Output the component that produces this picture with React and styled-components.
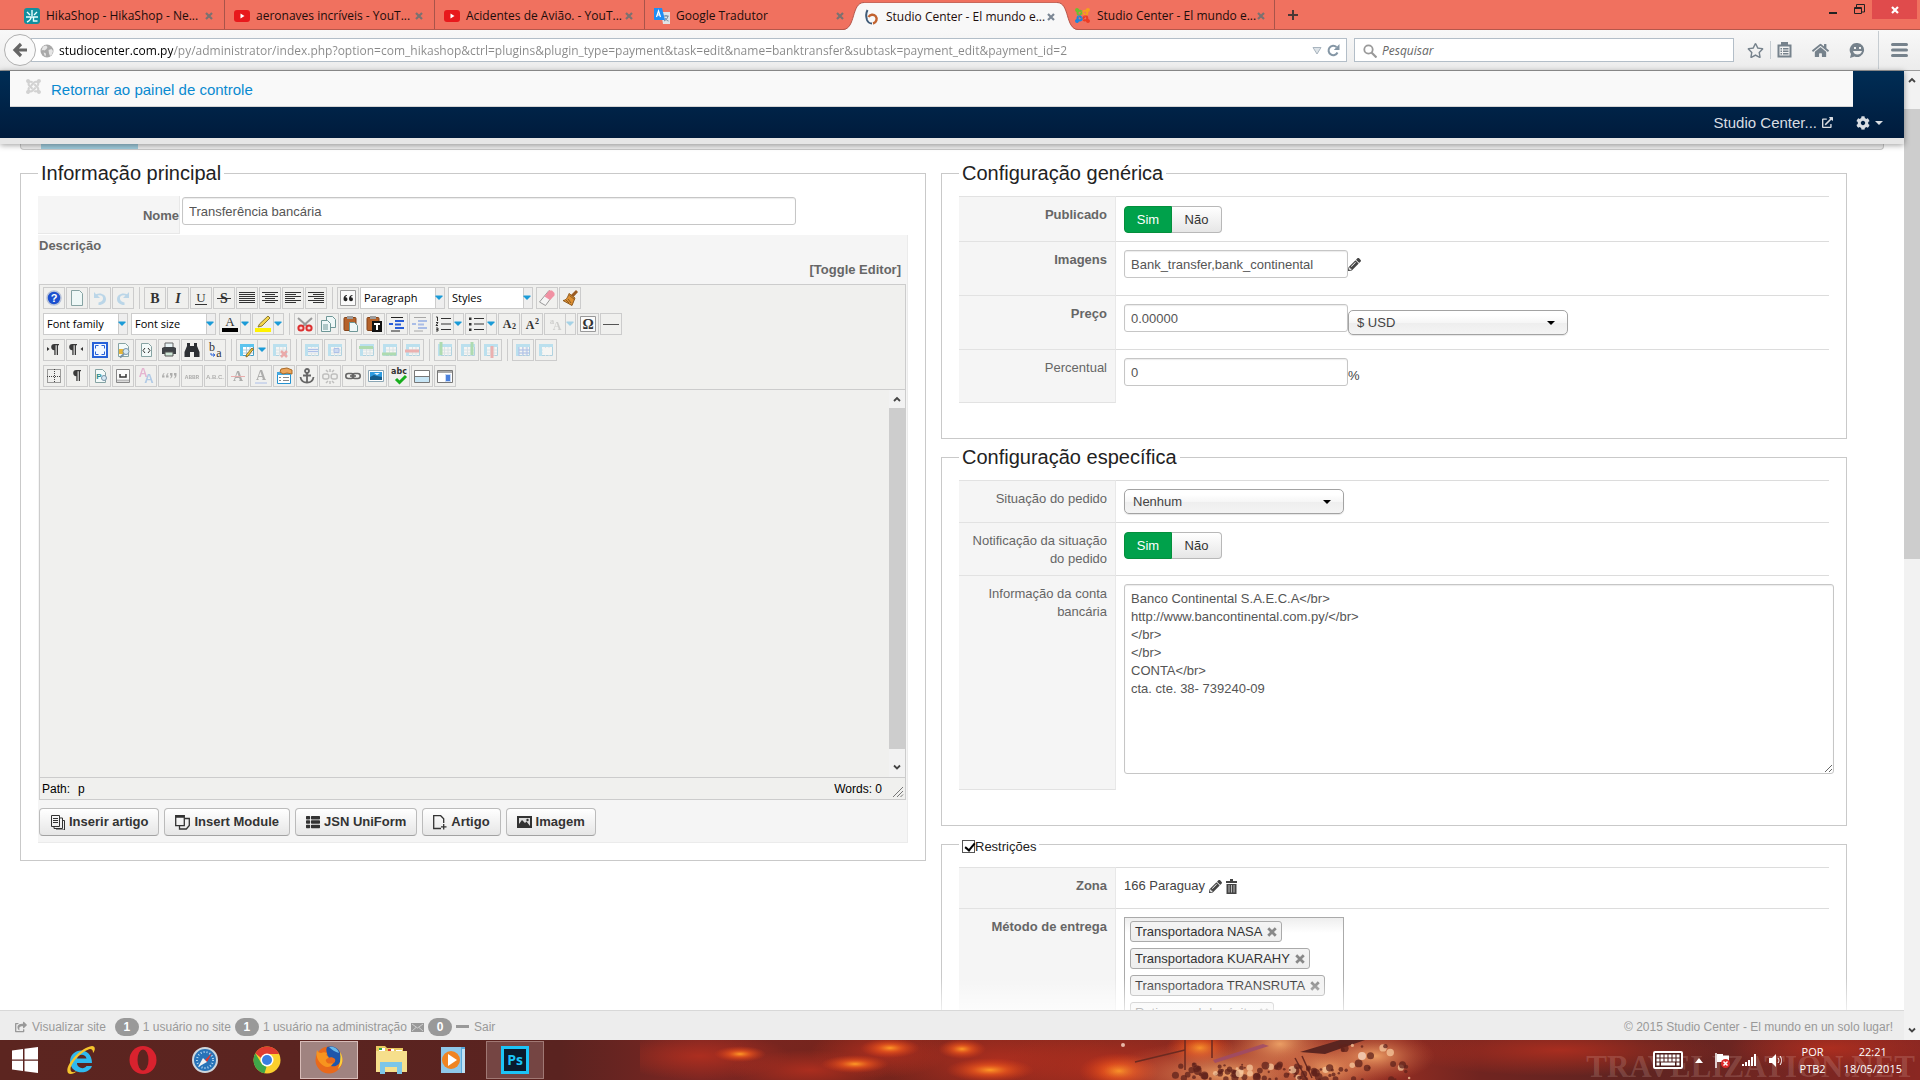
import React, { useState } from 'react'
import styled, { createGlobalStyle, css } from 'styled-components'
import { FaHome, FaRegStar, FaCog, FaPencilAlt, FaExternalLinkAlt, FaThList, FaShareSquare, FaJoomla } from 'react-icons/fa'

const GlobalStyle = createGlobalStyle`
  * { box-sizing: border-box; }
  body {
    margin: 0;
    font-family: "Liberation Sans", Arial, sans-serif;
    font-size: 13px;
    line-height: 18px;
    color: #333;
    background: #fff;
  }
  button, input, select, textarea { font: inherit; color: inherit; margin: 0; }
  button { cursor: pointer; }
  svg { display: block; flex: none; }
  a { text-decoration: none; }
`

/* ---------- browser icons ---------- */

const Cross = ({ color = '#7b7170', size = 8 }) => (
  <svg width={size} height={size} viewBox="0 0 8 8"><path d="M1 1l6 6M7 1L1 7" stroke={color} strokeWidth="2.2" /></svg>
)

const HikaIcon = () => (
  <svg width="16" height="16" viewBox="0 0 16 16">
    <rect width="16" height="16" rx="3" fill="#128f9e" />
    <path d="M8 2v6M3 4l3 3M13 4l-3 3M2 9h12M7 9c0 3-2 4-4 5M9.500 9v4h4" stroke="#e8ffff" strokeWidth="1.400" fill="none" />
  </svg>
)
const YoutubeIcon = () => (
  <svg width="16" height="16" viewBox="0 0 16 16">
    <rect y="2" width="16" height="12" rx="3" fill="#e8191c" />
    <path d="M6.500 5.500v5l4-2.500z" fill="#fff" />
  </svg>
)
const TranslateIcon = () => (
  <svg width="16" height="16" viewBox="0 0 16 16">
    <path d="M7 4h9v12H9z" fill="#dfe3e8" />
    <path d="M9.500 8h5M12 7v1M14 8c-.5 2.500-2 4-4 5M11 10c.5 1.500 2 2.500 3.500 3" stroke="#6b8299" fill="none" />
    <path d="M0 0h8l3 12H1a1 1 0 0 1-1-1z" fill="#1f8df5" />
    <path d="M2.500 9l2-6 2 6M3 7h3" stroke="#fff" strokeWidth="1.200" fill="none" />
  </svg>
)
const StudioIcon = () => (
  <svg width="16" height="16" viewBox="0 0 16 16" fill="none">
    <path d="M3.500 1C2 4 2 8 3 11c1 2.500 3 3.500 5 3.500" stroke="#3f5a77" strokeWidth="2" />
    <path d="M4.500 8C6 5.500 9.500 5 11.500 7c2.200 2.500 1 6.500-2.500 7.500" stroke="#c2622e" strokeWidth="2.400" />
  </svg>
)
/* one copy of the mark per quarter, each in its own colour */
const JoomlaStack = styled.span`
  display: grid;
  > * { grid-area: 1 / 1; }
  > :nth-child(1) { color: #6cbf2f; clip-path: inset(0 50% 50% 0); }
  > :nth-child(2) { color: #f7a11b; clip-path: inset(0 0 50% 50%); }
  > :nth-child(3) { color: #ee3b24; clip-path: inset(50% 0 0 50%); }
  > :nth-child(4) { color: #1a86dd; clip-path: inset(50% 50% 0 0); }
`
const JoomlaColor = () => (
  <JoomlaStack><FaJoomla size={17} /><FaJoomla size={17} /><FaJoomla size={17} /><FaJoomla size={17} /></JoomlaStack>
)
const GlobeIcon = () => (
  <svg width="14" height="14" viewBox="0 0 14 14">
    <circle cx="7" cy="7" r="6.500" fill="#a9a9a9" />
    <path d="M3 2.500l3-1 1.500 1.500-1 2-2 1.500L3 6l-1.500.5zM8.500 6l3-1 1.500 2-1 3.500-2 1.500-1-2.500zM3.500 8.500l2 .5.5 2-1 1.500z" fill="#e6e6e6" />
  </svg>
)

/* ---------- window and tabs ---------- */

const Desktop = styled.div`
  display: flex;
  flex-direction: column;
  height: 100vh;
  overflow: hidden;
`
const TabStrip = styled.div`
  display: flex;
  flex: none;
  height: 30px;
  padding-left: 15px;
  background: #f0715f;
  box-shadow: inset 0 -1px 0 #b5574b;
  font: 12px/16px "Open Sans", "Noto Sans", sans-serif;
  color: #1d0d0b;
`
const Tab = styled.div`
  display: flex;
  align-items: center;
  gap: 6px;
  width: 210px;
  padding: 2px 9px 0;
  margin-bottom: 1px;
  border-right: ${p => (p.$line ? '1px solid #a8544a' : 'none')};
`
const ActiveTab = styled.div`
  display: flex;
  width: 234px;
  margin: 0 -12px;
  z-index: 1;
`
const ActiveBody = styled.div`
  display: flex;
  flex: 1;
  align-items: center;
  gap: 6px;
  margin-top: 2px;
  background: #f8f8f8;
  border-top: 1px solid #c9685b;
`
const TabTitle = styled.span`
  flex: 1;
  margin-right: -6px;
  white-space: nowrap;
`
const TabClose = styled.button`
  display: flex;
  align-items: center;
  justify-content: center;
  width: 12px;
  height: 16px;
  padding: 0;
  border: 0;
  background: none;
`
const NewTab = styled(TabClose)`
  width: 36px;
  height: 30px;
`
const WindowButtons = styled.div`
  display: flex;
  margin-left: auto;
  padding-right: 3px;
`
const WindowButton = styled.button`
  display: flex;
  align-items: center;
  justify-content: center;
  width: ${p => (p.$close ? 45 : 26)}px;
  height: 19px;
  padding: 0;
  border: 0;
  background: ${p => (p.$close ? '#e04b4c' : 'none')};
`

const tabs = [
  { title: 'HikaShop - HikaShop - Ne...', icon: <HikaIcon />, line: true },
  { title: 'aeronaves incríveis - YouT...', icon: <YoutubeIcon />, line: true },
  { title: 'Acidentes de Avião. - YouT...', icon: <YoutubeIcon />, line: true },
  { title: 'Google Tradutor', icon: <TranslateIcon /> },
  { title: 'Studio Center - El mundo e...', icon: <StudioIcon />, active: true },
  { title: 'Studio Center - El mundo e...', icon: <JoomlaColor />, line: true },
]

const Tabs = () => (
  <TabStrip>
    {tabs.map((t, i) => t.active ? (
      <ActiveTab key={i}>
        <svg width="21" height="30" viewBox="0 0 21 30">
          <path d="M0 30C13 29 8 2.500 21 2.500V30z" fill="#f8f8f8" />
          <path d="M0 29.500C13 29 8 2.500 21 2.500" fill="none" stroke="#b5574b" />
        </svg>
        <ActiveBody>
          {t.icon}
          <TabTitle>{t.title}</TabTitle>
          <TabClose aria-label="Fechar aba"><Cross color="#7b8794" /></TabClose>
        </ActiveBody>
        <svg width="21" height="30" viewBox="0 0 21 30">
          <path d="M21 30C8 29 13 2.500 0 2.500V30z" fill="#f8f8f8" />
          <path d="M21 29.500C8 29 13 2.500 0 2.500" fill="none" stroke="#b5574b" />
        </svg>
      </ActiveTab>
    ) : (
      <Tab key={i} $line={t.line}>
        {t.icon}
        <TabTitle>{t.title}</TabTitle>
        <TabClose aria-label="Fechar aba"><Cross /></TabClose>
      </Tab>
    ))}
    <NewTab aria-label="Nova aba">
      <svg width="10" height="10" viewBox="0 0 10 10"><path d="M5 0v10M0 5h10" stroke="#4a3836" strokeWidth="2" /></svg>
    </NewTab>
    <WindowButtons>
      <WindowButton aria-label="Minimizar">
        <svg width="10" height="10" viewBox="0 0 10 10"><path d="M1 8h8" stroke="#222" strokeWidth="2" /></svg>
      </WindowButton>
      <WindowButton aria-label="Restaurar">
        <svg width="11" height="11" viewBox="0 0 11 11" fill="none" stroke="#222"><path d="M.5 3.500h7v6h-7zM2.500 3V.5h8V8H8M.5 4.500h7" /></svg>
      </WindowButton>
      <WindowButton $close aria-label="Fechar"><Cross color="#fff" /></WindowButton>
    </WindowButtons>
  </TabStrip>
)

/* ---------- address bar ---------- */

const NavBar = styled.div`
  display: flex;
  flex: none;
  align-items: center;
  height: 41px;
  padding: 0 12px 0 4px;
  background: linear-gradient(#f8f8f8, #ececec);
  border-bottom: 1px solid #9b9b9b;
  font: 12px/16px "Open Sans", "Noto Sans", sans-serif;
  color: #76828c;
`
const BackButton = styled.button`
  display: flex;
  align-items: center;
  justify-content: center;
  width: 32px;
  height: 32px;
  margin-right: -5px;
  padding: 0;
  border: 1px solid #b0b0b0;
  border-radius: 50%;
  background: #f9f9f9;
  z-index: 1;
`
const Box = styled.div`
  display: flex;
  align-items: center;
  gap: 5px;
  height: 24px;
  padding: 1px 6px 0 8px;
  background: #fff;
  border: 1px solid #b3bec8;
`
const UrlBox = styled(Box)`flex: 1; margin-right: 7px;`
const SearchBox = styled(Box)`width: 380px; margin-right: 13px;`
const BarInput = styled.input`
  flex: 1;
  min-width: 0;
  padding: 0;
  border: 0;
  outline: 0;
  background: none;
  color: #888;
  &::placeholder { color: #666; font-style: italic; opacity: 1; }
`
/* the host part of the address is darker than the rest */
const UrlInput = styled(BarInput)`
  background: linear-gradient(to right, #000 114px, #888 114px);
  -webkit-background-clip: text;
  background-clip: text;
  -webkit-text-fill-color: transparent;
`
const BarIcons = styled.div`
  display: flex;
  align-items: center;
  gap: 20px;
  height: 40px;
`
const IconButton = styled.button`
  display: flex;
  padding: 0;
  border: 0;
  background: none;
  color: inherit;
`
const BarLine = styled.i`
  width: 1px;
  height: ${p => (p.$tall ? 38 : 18)}px;
  margin: 0 ${p => (p.$tall ? -8 : -14)}px;
  background: #c6ccd1;
`

const AddressBar = () => (
  <NavBar>
    <BackButton aria-label="Voltar">
      <svg width="16" height="16" viewBox="0 0 16 16"><path d="M15 8H3M9 2L3 8l6 6" stroke="#666" strokeWidth="3.200" fill="none" /></svg>
    </BackButton>
    <UrlBox>
      <GlobeIcon />
      <UrlInput aria-label="Endereço" defaultValue="studiocenter.com.py/py/administrator/index.php?option=com_hikashop&ctrl=plugins&plugin_type=payment&task=edit&name=banktransfer&subtask=payment_edit&payment_id=2" />
      <svg width="10" height="12" viewBox="0 0 10 12" fill="none"><path d="M1 2.500h8L5 9z" fill="#dde3e8" stroke="#a9b5bf" /></svg>
      <svg width="13" height="13" viewBox="0 0 13 13"><path d="M10.500 8.500A4.700 4.700 0 1 1 9.500 3" stroke="#8496a5" strokeWidth="2" fill="none" /><path d="M12.500 0v6H6.800z" fill="#8496a5" /></svg>
    </UrlBox>
    <SearchBox>
      <svg width="14" height="14" viewBox="0 0 14 14"><circle cx="5.500" cy="5.500" r="4.200" stroke="#999" strokeWidth="1.800" fill="none" /><path d="M8.500 8.500l5 5" stroke="#999" strokeWidth="2.200" /></svg>
      <BarInput aria-label="Pesquisar" placeholder="Pesquisar" />
    </SearchBox>
    <BarIcons>
      <IconButton aria-label="Favoritos"><FaRegStar size={17} /></IconButton>
      <BarLine />
      <IconButton aria-label="Lista de favoritos">
        <svg width="15" height="16" viewBox="0 0 15 16">
          <path d="M1.500 3.500h12v11h-12z" fill="none" stroke="#76828c" strokeWidth="2" />
          <path d="M4 0h7v4H4zM3.500 6h1.500v1.500H3.500zM6 6h5.500v1.500H6zM3.500 8.500h1.500V10H3.500zM6 8.500h5.500V10H6zM3.500 11h1.500v1.500H3.500zM6 11h5.500v1.500H6z" fill="#76828c" />
        </svg>
      </IconButton>
      <IconButton aria-label="Página inicial"><FaHome size={17} /></IconButton>
      <IconButton aria-label="Conversa">
        <svg width="17" height="17" viewBox="0 0 17 17">
          <path d="M8.500 1a7 7 0 1 1-3 13.500L1 16l1-4A7 7 0 0 1 8.500 1z" fill="#76828c" />
          <path d="M5 5h2v2H5zM10 5h2v2h-2zM4 9h9c-.5 2.500-2.500 3.500-4.500 3.500S4.500 11.500 4 9z" fill="#f0f0f0" />
        </svg>
      </IconButton>
      <BarLine $tall />
      <IconButton aria-label="Menu">
        <svg width="17" height="14" viewBox="0 0 17 14"><path d="M1.500 1.500h14M1.500 7h14M1.500 12.500h14" stroke="#76828c" strokeWidth="3" strokeLinecap="round" /></svg>
      </IconButton>
    </BarIcons>
  </NavBar>
)

/* ---------- page frame ---------- */

const Viewport = styled.div`
  display: flex;
  flex: 1;
  min-height: 0;
`
const Page = styled.div`
  display: flex;
  flex-direction: column;
  flex: 1;
  min-width: 0;
`
const Header = styled.header`
  flex: none;
  background: linear-gradient(#002d55, #001b3c);
  border-bottom: 6px solid #e6e6e6;
  box-shadow: 0 1px 6px rgba(0, 0, 0, .4);
  z-index: 2;
`
const ReturnBar = styled.div`
  display: flex;
  align-items: center;
  gap: 9px;
  height: 36px;
  margin: 0 51px 0 10px;
  padding: 2px 0 0 15px;
  background: #f9f9f9;
  border-bottom: 1px solid #d5d5d5;
  font-size: 15px;
  a { color: #0a8ad0; }
  svg { margin-bottom: 6px; color: #d2d2d2; }
`
const SiteLinks = styled.div`
  display: flex;
  align-items: center;
  justify-content: flex-end;
  gap: 5px;
  height: 31px;
  padding-right: 21px;
  font-size: 15px;
  color: #d9dde2;
  a { display: flex; align-items: center; gap: 5px; margin-right: 18px; color: inherit; }
`
const ToolbarEdge = styled.div`
  flex: none;
  height: 6px;
  margin: 0 20px;
  padding-left: 20px;
  border: 1px solid #c8c8c8;
  border-top: 0;
  border-radius: 0 0 4px 4px;
  background: #ededed;
  i { display: block; width: 97px; height: 5px; background: #9fcbdc; }
`
const Content = styled.main`
  display: grid;
  grid-template-columns: 1fr 1fr;
  align-items: start;
  gap: 15px;
  flex: 1;
  min-height: 0;
  padding: 13px 57px 0 20px;
  overflow: hidden;
  position: relative;
  &::after {
    content: '';
    position: absolute;
    left: 0;
    right: 0;
    bottom: 0;
    height: 32px;
    background: linear-gradient(rgba(255, 255, 255, 0), rgba(255, 255, 255, .7));
    pointer-events: none;
  }
`
const Column = styled.div`
  display: flex;
  flex-direction: column;
  gap: 8px;
  min-width: 0;
`
const Group = styled.fieldset`
  min-width: 0;
  margin: 0;
  padding: 13px 17px ${p => p.$bottom || 35}px;
  border: 1px solid #c9c9c9;
`
const Legend = styled.legend`
  padding: 0 3px;
  font-size: ${p => (p.$small ? 13 : 20)}px;
  line-height: 20px;
  color: #222;
`
const CheckLabel = styled.label`
  display: flex;
  align-items: center;
  height: 20px;
  padding-top: 5px;
  line-height: 15px;
`
const Check = styled.input`
  appearance: none;
  width: 13px;
  height: 13px;
  border: 1px solid #555;
  background: #fff;
  &:checked::before {
    content: '';
    display: block;
    width: 4px;
    height: 8px;
    margin: 0 0 0 4px;
    border: solid #000;
    border-width: 0 2px 2px 0;
    transform: rotate(40deg);
  }
`

/* ---------- form rows ---------- */

const Row = styled.div`
  display: flex;
`
const RowLabel = styled.div`
  flex: none;
  width: 157px;
  padding: 9px 8px 7px;
  border-top: 1px solid #e2e2e2;
  border-right: 1px solid #e8e8e8;
  border-bottom: ${p => (p.$last ? '1px solid #e2e2e2' : '0')};
  background: #f5f5f5;
  color: #666;
  text-align: right;
  font-weight: ${p => (p.$bold ? 'bold' : 'normal')};
`
const RowValue = styled.div`
  display: flex;
  align-items: flex-start;
  flex: 1;
  min-width: 0;
  padding: 8px 0 ${p => p.$bottom || 8}px 8px;
  border-top: 1px solid #dcdcdc;
  color: #333;
`
const fieldLook = css`
  border: 1px solid #c6c6c6;
  border-radius: 3px;
  background: #fff;
  color: #555;
  box-shadow: inset 0 1px 1px rgba(0, 0, 0, .08);
  outline: 0;
`
const TextField = styled.input`
  ${fieldLook}
  width: ${p => p.$width || 224}px;
  height: 28px;
  padding: 0 6px;
`
const TextArea = styled.textarea`
  ${fieldLook}
  flex: none;
  width: calc(100% + 5px);
  height: 190px;
  padding: 5px 6px;
  line-height: 18px;
  resize: vertical;
`
const SelectWrap = styled.div`
  display: grid;
  align-items: center;
  width: 220px;
  margin-top: ${p => p.$top || 0}px;
  > * { grid-area: 1 / 1; }
  svg { justify-self: end; margin-right: 13px; pointer-events: none; }
`
const Picker = styled.select`
  appearance: none;
  height: 25px;
  padding: 1px 24px 0 8px;
  border: 1px solid #a3a3a3;
  border-radius: 5px;
  background: linear-gradient(#fff 20%, #f6f6f6 50%, #eee 52%, #f4f4f4);
  box-shadow: 0 1px 1px rgba(0, 0, 0, .1);
  color: #444;
`
const Switch = styled.div`
  display: flex;
  height: 27px;
  margin-top: 1px;
`
const SwitchOption = styled.label`
  display: flex;
  align-items: center;
  justify-content: center;
  width: ${p => (p.$first ? 48 : 50)}px;
  border: 1px solid ${p => (p.$on ? '#048f3c' : '#b8b8b8')};
  border-left-width: ${p => (p.$first ? 1 : 0)}px;
  border-radius: ${p => (p.$first ? '4px 0 0 4px' : '0 4px 4px 0')};
  background: ${p => (p.$on ? '#00a14b' : 'linear-gradient(#fff, #e6e6e6)')};
  color: ${p => (p.$on ? '#fff' : '#333')};
  cursor: pointer;
  input { appearance: none; width: 0; height: 0; }
`
const Inline = styled.span`
  display: flex;
  align-items: center;
  height: ${p => p.$h || 28}px;
  gap: 4px;
  color: #444;
`
const Tags = styled.ul`
  display: flex;
  flex-direction: column;
  align-items: flex-start;
  gap: 6px;
  width: 220px;
  margin: 0;
  padding: 3px 5px 10px;
  list-style: none;
  border: 1px solid #aaa;
  background: linear-gradient(#eee, #fff 15px);
`
const Tag = styled.li`
  display: flex;
  align-items: center;
  gap: 5px;
  height: 21px;
  padding: 0 4px;
  border: 1px solid #aaa;
  border-radius: 3px;
  background: linear-gradient(#f4f4f4, #eee);
  color: #333;
`

const YesNo = ({ name, label }) => {
  const [on, setOn] = useState(true)
  return (
    <Switch role="radiogroup" aria-label={label}>
      <SwitchOption $first $on={on}><input type="radio" name={name} checked={on} onChange={() => setOn(true)} />Sim</SwitchOption>
      <SwitchOption $on={!on}><input type="radio" name={name} checked={!on} onChange={() => setOn(false)} />Não</SwitchOption>
    </Switch>
  )
}

const Dropdown = ({ id, value, top, label }) => (
  <SelectWrap $top={top}>
    <Picker id={id} aria-label={label} defaultValue={value}><option>{value}</option></Picker>
    <svg width="8" height="4" viewBox="0 0 8 4"><path d="M0 0h8L4 4z" fill="#000" /></svg>
  </SelectWrap>
)

const Trash = () => (
  <svg width="11" height="15" viewBox="0 0 11 15">
    <path d="M4 0h3v2h4v2H0V2h4zM0.500 5h10v10H.5z" fill="#444" />
    <path d="M3 6v7.500M5.500 6v7.500M8 6v7.500" stroke="#bbb" />
  </svg>
)

/* ---------- editor icons ---------- */

const Doc = () => <path d="M3.500 1.500h7l3 3v10h-10z" fill="#f3faf9" stroke="#86a3a3" />
const Lines = ({ rows }) => <path d={rows.map(([x, w], i) => `M${x} ${2.5 + i * 2}h${w}`).join('')} stroke="#333" />
const Grid = ({ children }) => (
  <>
    <path d="M1.500 2.500h13v11h-13z" fill="#fff" stroke="#3f9cc4" />
    <path d="M1 2h14v3H1zM1 5h3v9H1z" fill="#5cc4ee" />
    <path d="M4 8h10M4 11h10M7.500 5v9M11 5v9" stroke="#b5cdd8" fill="none" />
    {children}
  </>
)
const Pilcrow = ({ x = 4 }) => <path transform={`translate(${x} 2)`} d="M8 0v1.300H7V11H5.700V1.300H4.600V11H3.300V6.200A3.100 3.100 0 0 1 3.300 0z" fill="#3a3a3a" />
const Letter = ({ x = 8, y = 13, size = 14, color = '#333', font = 'Liberation Serif', children, ...rest }) => (
  <text x={x} y={y} fontSize={size} fill={color} fontFamily={font} textAnchor="middle" fontWeight="bold" {...rest}>{children}</text>
)
const Clip = () => (
  <>
    <rect x="1" y="1.500" width="12" height="13" rx="1" fill="#b5622a" stroke="#83431a" />
    <path d="M4 0h6v3H4z" fill="#9d9d9d" />
  </>
)
const Boxed = ({ children }) => <><path d="M.5.5h15v15H.5z" fill="#fafafa" stroke="#999" />{children}</>

const icons = {
  help: <><circle cx="8" cy="8" r="7" fill="#1c50cf" stroke="#b9c3d8" strokeWidth="1.500" /><Letter y={12} size={11} color="#fff" font="Liberation Sans">?</Letter></>,
  newdoc: <path d="M2.500.5h8l3 3v12h-11z" fill="#eef8f7" stroke="#86a3a3" />,
  undo: <path d="M2 2v6h6L5.500 5.600C9 4.500 11.500 6 11 9c-.3 2-2 3-4.500 3.500V15C11 15 14 12.500 14 9c0-4.500-5.500-7-10-4.800z" fill="#5aa5dc" />,
  redo: <path d="M14 2v6H8l2.500-2.400C7 4.500 4.500 6 5 9c.3 2 2 3 4.500 3.500V15C5 15 2 12.500 2 9c0-4.500 5.500-7 10-4.800z" fill="#5aa5dc" />,
  bold: <Letter>B</Letter>,
  italic: <Letter fontStyle="italic">I</Letter>,
  underline: <><Letter y={12} size={13} fontWeight="normal">U</Letter><path d="M2 14.500h12" stroke="#333" /></>,
  strike: <><Letter>S</Letter><path d="M1 8.500h14" stroke="#333" /></>,
  full: <Lines rows={[[0, 16], [0, 16], [0, 16], [0, 16], [0, 16], [0, 16]]} />,
  center: <Lines rows={[[0, 16], [3, 10], [0, 16], [3, 10], [0, 16], [3, 10]]} />,
  left: <Lines rows={[[0, 16], [0, 11], [0, 16], [0, 10], [0, 16], [0, 11]]} />,
  right: <Lines rows={[[0, 16], [5, 11], [0, 16], [6, 10], [0, 16], [5, 11]]} />,
  quote: <Boxed><path d="M7 5C5 5 3.500 6.500 3.500 9a2 2 0 1 0 2-1.800C5.500 6.500 6 6 7 5.800zM12.500 5C10.500 5 9 6.500 9 9a2 2 0 1 0 2-1.800c0-.7.5-1.200 1.500-1.400z" fill="#222" /></Boxed>,
  eraser: <><path d="M10 .5l5 3.500L6.500 15.500.5 12z" fill="#f5f5f5" stroke="#9a9a9a" /><path d="M10 .5h3l2.500 2.500v2.500L11 10 5.500 6.500z" fill="#f191a3" /></>,
  brush: <><path d="M14 0l2 2-4.500 5L9 5z" fill="#9a5b21" /><path d="M7 3.500l6 4.500-3 7.500-9-5c3 0 5-3.500 6-7z" fill="#dd9033" stroke="#8f5a1d" /><path d="M4 10l3 3M6 9l3 4M7.500 5.500l5 4" stroke="#8f5a1d" /></>,
  color: <><Letter x={8} y={10} size={13} fontWeight="normal">A</Letter><path d="M0 12h16v4H0z" fill="#000" /></>,
  highlight: <><path d="M13 0l2 2-8 8-4 1 1.500-3z" fill="#f3d54c" stroke="#8a7a34" /><path d="M0 12h16v4H0z" fill="#fff200" /></>,
  cut: <><path d="M1 2l9 8M15 2L6 10" stroke="#999" strokeWidth="2" /><circle cx="4" cy="12" r="2.600" fill="#f6d6d6" stroke="#dc3030" strokeWidth="2" /><circle cx="12" cy="12" r="2.600" fill="#f6d6d6" stroke="#dc3030" strokeWidth="2" /></>,
  copy: <g fill="#eef7f7" stroke="#6e9797"><path d="M6.500.5h6l3 3v8h-9z" /><path d="M1.500 4.500h6l3 3v8h-9z" /><path d="M3 9h5M3 11h5M3 13h5" /></g>,
  paste: <><Clip /><path d="M6.500 6.500h5l3 3v6h-8z" fill="#eef7f7" stroke="#6e9797" /></>,
  pastetext: <><Clip /><path d="M6 5h10v11H6z" fill="#111" /><path d="M8 7h6v2h-2v5h-2V9H8z" fill="#fff" /></>,
  indent: <><path d="M2 1.500h12M2 15h9" stroke="#222" /><path d="M6 5h9M6 8.500h6M6 12h9M0 8h4" stroke="#2a5fd8" strokeWidth="2" /></>,
  outdent: <><path d="M2 1.500h12M2 15h9" stroke="#222" /><path d="M6 5h9M6 8.500h6M6 12h9M0 8h4" stroke="#2a5fd8" strokeWidth="2" /></>,
  numlist: <><path d="M6 2.500h10M6 8h10M6 13.500h10" stroke="#333" /><path d="M1 1h1.500v4M1 6.500h2l-2 3h2M1 12h2v1.500H1.500H3V15H1" stroke="#333" fill="none" /></>,
  bullist: <><path d="M6 2.500h10M6 8h10M6 13.500h10" stroke="#333" /><path d="M1 1.500h2.500V4H1zM1 7h2.500v2.500H1zM1 12.500h2.500V15H1z" fill="#333" /></>,
  sub: <><Letter x={6} y={12} size={12}>A</Letter><Letter x={13} y={13} size={8}>2</Letter></>,
  sup: <><Letter x={6} y={13} size={12}>A</Letter><Letter x={13} y={8} size={8}>2</Letter></>,
  styles: <g opacity=".5"><Letter x={5} y={8} size={9}>a</Letter><Letter x={10} y={14} size={12}>A</Letter></g>,
  omega: <Boxed><Letter>Ω</Letter></Boxed>,
  rule: <path d="M0 8.500h16" stroke="#555" />,
  ltr: <><Pilcrow x={5} /><path d="M1 5l2.500 2L1 9z" fill="#333" /></>,
  rtl: <><Pilcrow x={0} /><path d="M14 5l-2.500 2L14 9z" fill="#333" /></>,
  fullscreen: <><rect x="1" y="1" width="14" height="14" fill="#f4f8ff" stroke="#2a62d8" strokeWidth="2" /><path d="M3.500 6.500v-3h3M9.500 3.500h3v3M12.500 9.500v3h-3M6.500 12.500h-3v-3" fill="none" stroke="#2a62d8" /></>,
  preview: <><Doc /><path d="M4 7h6v5H4z" fill="#e5b53a" /><circle cx="11" cy="9.500" r="3" fill="#d5e8f4" stroke="#7893a7" /><path d="M9 12l-4 3.500" stroke="#7893a7" strokeWidth="2" /></>,
  code: <><Doc /><path d="M7 6L5 8.500 7 11M10 6l2 2.500L10 11" stroke="#333" fill="none" /></>,
  print: <><path d="M4 1h8v5H4z" fill="#e8f4f6" stroke="#666" /><path d="M1 6l2-1h10l2 1v6H1z" fill="#3e4246" /><path d="M4 10h8v4H4z" fill="#cfe7d7" stroke="#555" /></>,
  search: <path d="M3 1h3v3h4V1h3v3l2.500 6v5H10v-5H6v5H.5v-5L3 4z" fill="#2c2f33" />,
  replace: <><Letter x={5} y={9} size={12} fontWeight="normal">b</Letter><Letter x={12} y={15} size={12} fontWeight="normal">a</Letter><path d="M4 11v2h3M6 11.500L8 13l-2 1.500" stroke="#2a62d8" fill="none" /></>,
  table: <Grid><path d="M14.500 7L9 14l-2 1 .5-2.500L13 6z" fill="#f3d037" stroke="#8c6a2a" /></Grid>,
  tabledel: <Grid><path d="M9 9l6 6M15 9l-6 6" stroke="#e02b2b" strokeWidth="2.500" /></Grid>,
  rowprops: <Grid><path d="M4 6h10v5H4z" fill="#d9e7ff" /><path d="M4 7.500h10M4 9.500h10" stroke="#3569de" /></Grid>,
  cellprops: <Grid><path d="M7 6.500h5v4H7z" fill="#8db2f5" stroke="#3569de" /></Grid>,
  rowbefore: <Grid><path d="M0 5.500h14" stroke="#35b53f" strokeWidth="3" /></Grid>,
  rowafter: <Grid><path d="M0 12h14" stroke="#35b53f" strokeWidth="3" /></Grid>,
  rowdel: <Grid><path d="M0 9h14" stroke="#e23c3c" strokeWidth="3" /></Grid>,
  colbefore: <Grid><path d="M4 0v13" stroke="#35b53f" strokeWidth="3" /></Grid>,
  colafter: <Grid><path d="M12 0v13" stroke="#35b53f" strokeWidth="3" /></Grid>,
  coldel: <Grid><path d="M9 4v12" stroke="#e23c3c" strokeWidth="3" /></Grid>,
  split: <Grid><path d="M4 5v9M8 5v9M12 5v9M4 8h11M4 11h11" stroke="#3569de" /></Grid>,
  merge: <Grid><path d="M5 6h9v7H5z" fill="#fff" /></Grid>,
  visual: <path d="M1.500 1.500h13v13h-13zM8.500 1v14M1 8.500h14" stroke="#444" strokeDasharray="1 1" fill="none" />,
  pilcrow: <Pilcrow />,
  pagebreak: <><Doc /><Letter x={7} y={11} size={8} color="#2b8d8d" font="Liberation Sans">P</Letter><circle cx="12" cy="10" r="2.500" fill="#d5e8f4" stroke="#7893a7" /></>,
  nbsp: <><path d="M1.500 1.500h13v13h-13z" fill="#fafafa" stroke="#888" /><path d="M5 6v3h6V6" stroke="#333" strokeWidth="1.500" fill="none" /><path d="M2 12.500h12" stroke="#bbb" strokeWidth="2" /></>,
  styleprops: <><Letter x={5} y={9} size={12} color="#d0489b" font="Liberation Sans">A</Letter><Letter x={11} y={15} size={13} color="#3f86d8" font="Liberation Sans">A</Letter></>,
  cite: <path d="M3 5C1.500 6 1 7.500 1 9.500h2.500v-2H2.500C2.500 6.500 3 6 3.500 5.500zM7 5C5.500 6 5 7.500 5 9.500h2.500v-2h-1C6.500 6.500 7 6 7.500 5.500zM9 5h2.500v2c0 1.500-.5 2.500-2 3.500L9 10c.7-.5 1-1 1-2.500H9zM13 5h2.500v2c0 1.500-.5 2.500-2 3.500L13 10c.7-.5 1-1 1-2.500h-1z" fill="#333" />,
  abbr: <Letter y={11} size={6} font="Liberation Mono">ABBR</Letter>,
  acronym: <Letter y={11} size={6} font="Liberation Sans">A.B.C.</Letter>,
  del: <><Letter>A</Letter><path d="M1 8.500h14" stroke="#d33" /></>,
  ins: <><Letter y={12}>A</Letter><path d="M2 15h12" stroke="#36d" /></>,
  attribs: <><path d="M1.500 4.500h13v11h-13z" fill="#fff" stroke="#2492d0" /><path d="M1 4h14v3H1z" fill="#46a7df" /><path d="M3 9.500h2M7 9.500h6M3 12.500h2M7 12.500h6" stroke="#888" /><path d="M5 1l6-1 5 2v4l-5-1-4 1-3-2z" fill="#eba45a" stroke="#a96a26" /></>,
  anchor: <g stroke="#666" strokeWidth="1.800" fill="none"><circle cx="8" cy="3" r="2" /><path d="M8 5v10M4 7.500h8M1.500 9c.5 4 3.500 5.500 6.500 5.500s6-1.500 6.500-5.500" /></g>,
  unlink: <g stroke="#666" strokeWidth="1.500" fill="none"><rect x=".8" y="6" width="6" height="5" rx="2" /><rect x="9.200" y="6" width="6" height="5" rx="2" /><path d="M8 1v3M8 13v3M4 2l2 2M12 2l-2 2M4 15l2-2M12 15l-2-2" /></g>,
  link: <g stroke="#666" strokeWidth="1.600" fill="none"><rect x=".8" y="5.500" width="8" height="5" rx="2.500" /><rect x="7.200" y="5.500" width="8" height="5" rx="2.500" /><path d="M5 8h6" /></g>,
  image: <><path d="M.5 2.500h15v11H.5z" fill="#fff" stroke="#8ba6b5" /><path d="M2 4h12v8H2z" fill="#2d9be0" /><path d="M2 12V9l4-2 3 1 5 1v3z" fill="#145c8b" /><path d="M6 5h6l-3 2z" fill="#eaf6ff" /></>,
  spell: <><Letter x={8} y={6} size={8} font="DejaVu Sans">abc</Letter><path d="M5 11l3.500 3.500L15 8" stroke="#17ae1d" strokeWidth="3" fill="none" /></>,
  layer: <><path d="M.5 2.500h15v12H.5z" fill="#fff" stroke="#777" /><path d="M1 9h14v5H1z" fill="#c7e5f5" /><path d="M0 8.500h16" stroke="#777" /></>,
  window: <><path d="M.5 2.500h15v12H.5z" fill="#fff" stroke="#777" /><path d="M1 3h14v2H1z" fill="#aaa" /><path d="M8.500 6.500h5v7h-5z" fill="#4b80dc" stroke="#c7d9f5" /></>,
}

/* "name*" is a split button, "-" a separator, "name~" greyed out */
const toolbarRows = [
  ['help', 'newdoc', 'undo~', 'redo~', '-', 'bold', 'italic', 'underline', 'strike', 'full', 'center', 'left', 'right', '-', 'quote', 'Paragraph', 'Styles', 'eraser', 'brush'],
  ['Font family', 'Font size', 'color*', 'highlight*', '-', 'cut', 'copy', 'paste', 'pastetext', 'indent', 'outdent~', 'numlist*', 'bullist*', 'sub', 'sup', 'styles~*', 'omega', 'rule'],
  ['ltr', 'rtl', 'fullscreen', 'preview', 'code', 'print', 'search', 'replace', '-', 'table*', 'tabledel~', '-', 'rowprops~', 'cellprops~', '-', 'rowbefore~', 'rowafter~', 'rowdel~', '-', 'colbefore~', 'colafter~', 'coldel~', '-', 'split~', 'merge~'],
  ['visual', 'pilcrow', 'pagebreak', 'nbsp', 'styleprops~', 'cite~', 'abbr~', 'acronym~', 'del~', 'ins~', 'attribs', 'anchor', 'unlink~', 'link', 'image', 'spell', 'layer', 'window'],
]

/* ---------- editor ---------- */

const NameLabel = styled.label`
  width: 142px;
  height: 38px;
  padding: 11px 0 0;
  margin-right: 2px;
  background: #f5f5f5;
  border: solid #e8e8e8;
  border-width: 0 1px 1px 0;
  color: #666;
  font-weight: bold;
  text-align: right;
`
const NameRow = styled(Row)`
  input { margin-top: 1px; }
  margin-bottom: 1px;
`
const EditorBlock = styled.div`
  padding: 0 1px 6px;
  background: #f5f5f5;
  border: solid #ebebeb;
  border-width: 0 1px 1px 0;
  color: #666;
`
const EditorTitle = styled.div`
  line-height: 22px;
  font-weight: bold;
`
const ToggleLine = styled.div`
  padding: 0 5px 2px;
  line-height: 25px;
  text-align: right;
  font-weight: bold;
  a { color: inherit; }
`
const Editor = styled.div`
  border: 1px solid #ccc;
  background: #f0f0ee;
`
const Tools = styled.div`
  display: flex;
  flex-direction: column;
  gap: 4px;
  padding: 2px 3px;
  border-bottom: 1px solid #ccc;
`
const ToolRow = styled.div`
  display: flex;
  gap: 1px;
  height: 22px;
`
const Tool = styled.button`
  display: flex;
  align-items: center;
  justify-content: ${p => (p.$split ? 'flex-start' : 'center')};
  gap: 3px;
  width: ${p => (p.$split ? 32 : 22)}px;
  padding: 0 0 0 ${p => (p.$split ? 2 : 0)}px;
  border: 1px solid #ccc;
  background: ${p => (p.$split ? 'linear-gradient(to right, transparent 20px, #ccc 20px, #ccc 21px, transparent 21px)' : 'none')};
  > svg { opacity: ${p => (p.$off ? 0.35 : 1)}; overflow: visible; }
`
const ToolLine = styled.i`
  width: 1px;
  margin: 0 3px 0 4px;
  background: #ccc;
`
const ToolSelect = styled.div`
  display: grid;
  align-items: center;
  width: 85px;
  margin-right: 2px;
  border: 1px solid #ccc;
  background: linear-gradient(to right, #fff 74px, #ccc 74px, #ccc 75px, #eee 75px);
  > * { grid-area: 1 / 1; }
  select {
    appearance: none;
    height: 20px;
    padding: 0 0 0 3px;
    border: 0;
    background: none;
    font: 11px/16px "Open Sans", "Noto Sans", sans-serif;
    color: #000;
  }
  svg { justify-self: end; margin-right: 1px; pointer-events: none; }
`
const Writing = styled.div`
  display: flex;
  height: 387px;
  textarea { flex: 1; border: 0; outline: 0; resize: none; background: #f0f0ee; }
`
const Scroll = styled.div`
  display: flex;
  flex-direction: column;
  align-items: center;
  flex: none;
  width: 16px;
  padding: 6px 0;
  background: #f2f2f2;
`
const Thumb = styled.div`
  width: 100%;
  flex: 0 0 ${p => p.$size}%;
  margin: ${p => p.$top || 5}px 0 auto;
  background: #cdcdcd;
`
const Status = styled.div`
  display: flex;
  justify-content: space-between;
  align-items: center;
  height: 22px;
  padding: 0 1px 0 2px;
  border-top: 1px solid #ccc;
  font-size: 12px;
  color: #000;
`
const StatusPart = styled.span`
  display: flex;
  gap: 8px;
`
const Extras = styled.div`
  display: flex;
  gap: 5px;
  margin-top: 8px;
`
const ExtraButton = styled.button`
  display: flex;
  align-items: center;
  gap: 4px;
  height: 28px;
  padding: 0 10px;
  border: 1px solid #bbb;
  border-bottom-color: #a2a2a2;
  border-radius: 4px;
  background: linear-gradient(#fff, #e6e6e6);
  font-weight: bold;
  color: #333;
`

const BlueArrow = () => (
  <svg width="8" height="6" viewBox="0 0 8 6"><path d="M.5.5h7v1L4 5 .5 1.500z" fill="#1b9bd7" /></svg>
)
const Chevron = ({ down }) => (
  <svg width="8" height="7" viewBox="0 0 8 7"><path d={down ? 'M1 1.500l3 3 3-3' : 'M1 5l3-3 3 3'} stroke="#444" strokeWidth="1.800" fill="none" /></svg>
)

const ToolItem = ({ item }) => {
  if (item === '-') return <ToolLine />
  const name = item.replace(/[~*]/g, '')
  if (!icons[name]) {
    return (
      <ToolSelect>
        <select aria-label={name}><option>{name}</option></select>
        <BlueArrow />
      </ToolSelect>
    )
  }
  const split = item.includes('*')
  return (
    <Tool type="button" aria-label={name} $split={split} $off={item.includes('~')}>
      <svg width="16" height="16" viewBox="0 0 16 16">{icons[name]}</svg>
      {split && <BlueArrow />}
    </Tool>
  )
}

const pageStack = <svg width="15" height="15" viewBox="0 0 15 15" fill="none" stroke="#333"><path d="M1.500.5h8v11h-8zM3 3.500h5M3 5.500h5M3 7.500h5M10 3h2.500v10.500H4V12M13 5.500h1.500V15H6" /></svg>
const moduleStack = <svg width="15" height="15" viewBox="0 0 15 15" fill="none" stroke="#333"><path d="M.7.7h8.600v10H.7zM.7 2h8.600M10 3.500h4.300v7l-3 3.500H4.500v-3" strokeWidth="1.300" /></svg>
const filePlus = <svg width="14" height="15" viewBox="0 0 14 15" fill="none" stroke="#333"><path d="M8 13.500H.7V.7h7l3 3V8M10.700 9v5.500M8 11.800h5.500" strokeWidth="1.300" /></svg>
const picture = <svg width="15" height="12" viewBox="0 0 15 12"><path d="M0 0h15v12H0z" fill="#333" /><path d="M2 2h11v8H2z" fill="#ddd" /><path d="M2 10V8l3-4 3 3 1.500-1.500L13 10z" fill="#333" /><circle cx="10.500" cy="4" r="1.200" fill="#333" /></svg>

const extras = [
  ['Inserir artigo', pageStack],
  ['Insert Module', moduleStack],
  ['JSN UniForm', <FaThList size={14} key="i" />],
  ['Artigo', filePlus],
  ['Imagem', picture],
]

const MainInfo = () => (
  <Group $bottom={17}>
    <Legend>Informação principal</Legend>
    <NameRow>
      <NameLabel htmlFor="name">Nome</NameLabel>
      <TextField id="name" $width={614} defaultValue="Transferência bancária" />
    </NameRow>
    <EditorBlock>
      <EditorTitle>Descrição</EditorTitle>
      <ToggleLine><a href="#toggle">[Toggle Editor]</a></ToggleLine>
      <Editor>
        <Tools>
          {toolbarRows.map((row, i) => (
            <ToolRow key={i}>{row.map((item, j) => <ToolItem key={j} item={item} />)}</ToolRow>
          ))}
        </Tools>
        <Writing>
          <textarea aria-label="Descrição" />
          <Scroll><Chevron /><Thumb $size={91} /><Chevron down /></Scroll>
        </Writing>
        <Status>
          <StatusPart><span>Path:</span><span>p</span></StatusPart>
          <StatusPart>Words: 0
            <svg width="14" height="18" viewBox="0 0 14 18"><path d="M3 17L13 7M7 17l6-6M10.500 17l2.500-2.500" stroke="#777" /></svg>
          </StatusPart>
        </Status>
      </Editor>
      <Extras>
        {extras.map(([text, icon]) => <ExtraButton type="button" key={text}>{icon}{text}</ExtraButton>)}
      </Extras>
    </EditorBlock>
  </Group>
)

/* ---------- right column ---------- */

const accountInfo = `Banco Continental S.A.E.C.A</br>
http://www.bancontinental.com.py/</br>
</br>
</br>
CONTA</br>
cta. cte. 38- 739240-09`

const carriers = ['Transportadora NASA', 'Transportadora KUARAHY', 'Transportadora TRANSRUTA', 'Retiro en el depósito']

const Settings = () => (
  <Column>
    <Group>
      <Legend>Configuração genérica</Legend>
      <Row>
        <RowLabel $bold>Publicado</RowLabel>
        <RowValue><YesNo name="published" label="Publicado" /></RowValue>
      </Row>
      <Row>
        <RowLabel $bold as="label" htmlFor="images">Imagens</RowLabel>
        <RowValue $bottom={17}>
          <TextField id="images" defaultValue="Bank_transfer,bank_continental" />
          <Inline><IconButton aria-label="Editar imagens"><FaPencilAlt size={13} /></IconButton></Inline>
        </RowValue>
      </Row>
      <Row>
        <RowLabel $bold as="label" htmlFor="price">Preço</RowLabel>
        <RowValue $bottom={14}>
          <TextField id="price" defaultValue="0.00000" />
          <Dropdown value="$ USD" top={6} label="Moeda" />
        </RowValue>
      </Row>
      <Row>
        <RowLabel $last as="label" htmlFor="percent">Percentual</RowLabel>
        <RowValue $bottom={10}>
          <TextField id="percent" defaultValue="0" />
          <Inline $h={35}>%</Inline>
        </RowValue>
      </Row>
    </Group>

    <Group>
      <Legend>Configuração específica</Legend>
      <Row>
        <RowLabel as="label" htmlFor="status">Situação do pedido</RowLabel>
        <RowValue><Dropdown id="status" value="Nenhum" /></RowValue>
      </Row>
      <Row>
        <RowLabel>Notificação da situação do pedido</RowLabel>
        <RowValue><YesNo name="notify" label="Notificação da situação do pedido" /></RowValue>
      </Row>
      <Row>
        <RowLabel $last as="label" htmlFor="account">Informação da conta bancária</RowLabel>
        <RowValue $bottom={16}><TextArea id="account" defaultValue={accountInfo} /></RowValue>
      </Row>
    </Group>

    <Group>
      <Legend $small>
        <CheckLabel><Check type="checkbox" defaultChecked />Restrições</CheckLabel>
      </Legend>
      <Row>
        <RowLabel $bold>Zona</RowLabel>
        <RowValue $bottom={12}>
          <Inline $h={20}>
            166 Paraguay
            <IconButton aria-label="Editar zona"><FaPencilAlt size={13} /></IconButton>
            <IconButton aria-label="Excluir zona"><Trash /></IconButton>
          </Inline>
        </RowValue>
      </Row>
      <Row>
        <RowLabel $bold>Método de entrega</RowLabel>
        <RowValue>
          <Tags>
            {carriers.map(c => (
              <Tag key={c}>{c}<IconButton aria-label={`Remover ${c}`}><Cross color="#888" size={10} /></IconButton></Tag>
            ))}
          </Tags>
        </RowValue>
      </Row>
    </Group>
  </Column>
)

/* ---------- status footer and taskbar ---------- */

const Footer = styled.footer`
  display: flex;
  flex: none;
  align-items: center;
  gap: 4px;
  height: 30px;
  padding: 3px 11px 0 15px;
  border-top: 1px solid #d8d8d8;
  background: #ededed;
  font-size: 12px;
  color: #999;
  a { display: flex; align-items: center; gap: 5px; color: inherit; }
  a:first-child { margin-right: 5px; }
`
const Badge = styled.b`
  width: 24px;
  border-radius: 9px;
  background: #999;
  color: #fff;
  text-align: center;
`
const Copyright = styled.span`
  margin-left: auto;
`
const TaskBar = styled.div`
  display: flex;
  flex: none;
  align-items: center;
  position: relative;
  height: 40px;
  overflow: hidden;
  background: linear-gradient(to right, #5c2520, #5a2320 560px, #7c2622 700px, #74241c 850px, #8e2c22 1400px, #702420 1480px, #5e2421 1640px, #8a2722);
`
/* lights of the wallpaper showing through the glass */
const Wallpaper = styled.svg`
  position: absolute;
  left: 640px;
  top: 0;
`
const Watermark = styled.span`
  position: absolute;
  right: 5px;
  bottom: 0;
  font: bold 31px/26px "Liberation Serif", serif;
  color: rgba(255, 225, 215, .18);
`
const AppButton = styled.button`
  display: flex;
  align-items: center;
  justify-content: center;
  width: 58px;
  height: 38px;
  margin-right: 4px;
  padding: 0;
  border: 1px solid ${p => (p.$state === 'active' ? '#d8bcb8' : p.$state ? '#a07874' : 'transparent')};
  background: ${p => (p.$state === 'active' ? '#a08380' : p.$state ? '#754543' : 'none')};
`
const Start = styled(AppButton)`
  width: 50px;
  margin-right: 2px;
`
const Tray = styled.div`
  display: flex;
  align-items: center;
  gap: 12px;
  height: 40px;
  margin-left: auto;
  padding-right: 18px;
  font: 11px/17px "Open Sans", "Noto Sans", sans-serif;
  color: #fff;
  text-align: center;
  z-index: 1;
`
const Clock = styled.div`
  margin-left: 6px;
`

const apps = [
  { name: 'Internet Explorer', art: <svg width="32" height="32" viewBox="0 0 32 32"><path d="M27 19H12c0 5 7 7 9.500 3H27c-3 9-21 9-22-4C5 3 27 2 27 19zM12 14.500h9.500c-1-5-8.500-5-9.500 0z" fill="#2fb9ee" /><path d="M3 29C-1 23 14 4 27 2c3 0 4 3 1 7 0-3-1-4-3-4C16 7 3 22 6 27c1 2 4 1 6 0-3 3-7 4-9 2z" fill="#f6c52c" /></svg> },
  { name: 'Opera', art: <svg width="30" height="30" viewBox="0 0 30 30"><ellipse cx="15" cy="15" rx="13.500" ry="14" fill="#d9222e" /><ellipse cx="15" cy="15" rx="5.500" ry="10.500" fill="#5c2520" /></svg> },
  { name: 'Safari', art: <svg width="28" height="28" viewBox="0 0 28 28"><circle cx="14" cy="14" r="12" fill="#2873b8" stroke="#cfd6dc" strokeWidth="2" /><circle cx="14" cy="14" r="8" fill="none" stroke="#b9dbf5" strokeDasharray="1 2" strokeWidth="2" /><path d="M21 7l-5 9-2-2z" fill="#e3322c" /><path d="M14 14l2 2-9 5 5-9z" fill="#f2f2f2" /></svg> },
  { name: 'Chrome', art: <svg width="28" height="28" viewBox="0 0 28 28"><circle cx="14" cy="14" r="13.500" fill="#fbd02d" /><path d="M2.300 7.300A13.500 13.500 0 0 1 26 8H14a6.500 6.500 0 0 0-6 4z" fill="#e03c31" /><path d="M2.300 7.300L8.500 17.500 13.500 21l-2 6.300A13.500 13.500 0 0 1 2.300 7.300z" fill="#3fa649" /><circle cx="14" cy="14" r="6.500" fill="#fff" /><circle cx="14" cy="14" r="5" fill="#3a7ee0" /></svg> },
  { name: 'Firefox', state: 'active', art: <svg width="30" height="30" viewBox="0 0 30 30"><circle cx="15" cy="15" r="13.500" fill="#e8691b" /><path d="M13 2c8-3 15 4 14 12-1 7-8 9-12 6 5-1 7-3 6-6-2-2-5-2-7-1 0-4-3-7-1-11z" fill="#1f56ab" /><path d="M15 2c5-1 9 2 10 6-4-1-7-3-10-6z" fill="#69b9ea" /><path d="M3 5c1 2 2 3 4 3 2-1 4-1 6 0-1 1-1 3 2 4-1 2-4 2-3 4 1 3 4 3 7 2-1 4-6 5-9 3-5-3-9-9-7-16z" fill="#f7941e" /><path d="M26 7c4 6 3 13-2 17 2-5 3-11 2-17z" fill="#fbd03f" /></svg> },
  { name: 'Explorador de arquivos', art: <svg width="32" height="30" viewBox="0 0 32 30"><path d="M1 1h9l2 2h16v4H1z" fill="#e8c95f" /><path d="M4 3h6v3H4zM13 4h6v3h-6zM21 5h6v3h-6z" fill="#fff" /><path d="M4 3h3v2H4z" fill="#2faa44" /><path d="M13 4h3v2h-3z" fill="#d93b2f" /><path d="M1 6h31v21H1z" fill="#f6df8c" /><path d="M5 29V17h22v12h-5v-7H10v7z" fill="#7cc6e8" /></svg> },
  { name: 'Media Player', art: <svg width="28" height="30" viewBox="0 0 28 30"><path d="M2 2h24v26H2z" fill="#58a9dc" /><path d="M23 4h3v24h-3z" fill="#bfe0f4" /><path d="M2 2h20v26H2z" fill="#8fc8ea" /><circle cx="12" cy="15" r="9" fill="#f08422" /><path d="M9 9v12l9-6z" fill="#fff" /></svg> },
  { name: 'Photoshop', state: 'open', art: <svg width="28" height="28" viewBox="0 0 28 28"><rect x="1.500" y="1.500" width="25" height="25" fill="#0a1a2c" stroke="#1cc4f7" strokeWidth="3" /><text x="14" y="19" textAnchor="middle" fontSize="14" fontWeight="bold" fontFamily="Open Sans" fill="#1cc4f7">Ps</text></svg> },
]

/* [cx, cy, rx, ry, gradient] */
const lights = [
  [60, 16, 90, 24, 'red'], [170, 30, 80, 20, 'red'], [240, 12, 70, 26, 'red'], [360, 20, 120, 40, 'red'], [470, 26, 110, 40, 'red'],
  [920, 10, 160, 26, 'red'], [1190, 8, 100, 24, 'red'],
  [100, 14, 26, 8, 'amber'], [215, 24, 34, 9, 'amber'], [250, 8, 30, 10, 'amber'], [322, 9, 24, 10, 'amber'], [350, 30, 44, 12, 'amber'],
  [479, 31, 40, 18, 'amber'], [560, 8, 34, 18, 'amber'], [590, 34, 130, 34, 'peach'], [640, 4, 60, 34, 'peach'], [690, 28, 60, 32, 'peach'], [735, 16, 60, 26, 'peach'],
]
/* heads and posts in front of the lights */
const noise = n => Math.abs(Math.sin(n * 127.1) * 43758.5) % 1
const specks = Array.from({ length: 110 }, (_, i) => {
  const x = 535 + noise(i + 1) * 235
  const high = x > 700 ? 4 : 24
  return [x, high + noise(i + 300) * (40 - high), 1 + noise(i + 700) * 3]
})

const Os = () => (
  <TaskBar>
    <Wallpaper width="1280" height="40" viewBox="0 0 1280 40" aria-hidden="true">
      <defs>
        <radialGradient id="red"><stop offset="0" stopColor="#b8301f" stopOpacity=".8" /><stop offset="1" stopColor="#b8301f" stopOpacity="0" /></radialGradient>
        <radialGradient id="amber"><stop offset="0" stopColor="#ff9a26" /><stop offset=".4" stopColor="#f0591c" stopOpacity=".7" /><stop offset="1" stopColor="#d83a18" stopOpacity="0" /></radialGradient>
        <radialGradient id="peach"><stop offset="0" stopColor="#f0a468" stopOpacity=".95" /><stop offset="1" stopColor="#c9583a" stopOpacity="0" /></radialGradient>
      </defs>
      {lights.map(([cx, cy, rx, ry, g], i) => <ellipse key={i} cx={cx} cy={cy} rx={rx} ry={ry} fill={`url(#${g})`} />)}
      <path d="M573 20l50-16 6 2-54 17z" fill="#9c4a6c" opacity=".8" />
      <path d="M660 12l40-12h25l-40 14z" fill="#5b2520" />
      <path d="M545 0v30M572 0v18M495 22l50-12M655 18l12 22M662 16l10 22" stroke="#6b2a20" strokeWidth="1.500" />
      {specks.map(([x, y, r], i) => <circle key={i} cx={x} cy={y} r={r} fill={i % 7 ? '#5f211b' : '#f6c79c'} opacity=".75" />)}
      <circle cx="722" cy="16" r="4" fill="#f0c3a8" /><circle cx="483" cy="5" r="2" fill="#e8b8a8" />
    </Wallpaper>
    <Watermark aria-hidden="true">TRAVELIZATION.NET</Watermark>
    <Start aria-label="Iniciar">
      <svg width="26" height="26" viewBox="0 0 26 26"><path d="M0 3.500L11 2v10.500H0zM12.500 1.800L26 0v12.500H12.500zM0 13.800h11V24L0 22.500zM12.500 13.800H26V26l-13.500-1.800z" fill="#fff" /></svg>
    </Start>
    {apps.map(a => <AppButton key={a.name} aria-label={a.name} $state={a.state}>{a.art}</AppButton>)}
    <Tray>
      <svg width="30" height="18" viewBox="0 0 30 18"><rect x="1" y="1" width="28" height="16" rx="1" fill="#4a1c1a" stroke="#fff" strokeWidth="2" /><path d="M3.500 5h24M3.500 9h24" stroke="#fff" strokeWidth="3" strokeDasharray="3 1" /><path d="M3.500 13h3M8 13h14M23.500 13h3" stroke="#fff" strokeWidth="3" /></svg>
      <svg width="8" height="5" viewBox="0 0 8 5"><path d="M0 5h8L4 0z" fill="#fff" /></svg>
      <svg width="15" height="15" viewBox="0 0 15 15"><path d="M1 0v15" stroke="#fff" strokeWidth="1.500" /><path d="M2 1h6v1.500h6V9H2z" fill="#fff" /><circle cx="10.500" cy="10.500" r="4.500" fill="#dd2a2a" /><path d="M8.500 8.500l4 4M12.500 8.500l-4 4" stroke="#fff" strokeWidth="1.500" /></svg>
      <svg width="15" height="12" viewBox="0 0 15 12"><path d="M0 10h2v2H0zM3 8h2v4H3zM6 6h2v6H6zM9 3h2v9H9zM12 0h2v12h-2z" fill="#fff" /></svg>
      <svg width="13" height="13" viewBox="0 0 13 13"><path d="M0 4h3l4-4v13L3 9H0z" fill="#fff" /><path d="M9 4c1.200 1.500 1.200 3.500 0 5M11 2c2 2.500 2 6.500 0 9" stroke="#fff" fill="none" /></svg>
      <Clock>POR<br />PTB2</Clock>
      <Clock>22:21<br />18/05/2015</Clock>
    </Tray>
  </TaskBar>
)

const App = () => {
  return (
    <Desktop>
      <GlobalStyle />
      <Tabs />
      <AddressBar />
      <Viewport>
        <Page>
          <Header>
            <ReturnBar>
              <FaJoomla size={17} />
              <a href="#painel">Retornar ao painel de controle</a>
            </ReturnBar>
            <SiteLinks>
              <a href="#site">Studio Center... <FaExternalLinkAlt size={11} /></a>
              <FaCog size={14} />
              <svg width="8" height="4" viewBox="0 0 8 4"><path d="M0 0h8L4 4z" fill="#d9dde2" /></svg>
            </SiteLinks>
          </Header>
          <ToolbarEdge><i /></ToolbarEdge>
          <Content>
            <MainInfo />
            <Settings />
          </Content>
          <Footer>
            <a href="#view"><FaShareSquare size={12} /> Visualizar site</a>
            <Badge>1</Badge> 1 usuário no site
            <Badge>1</Badge> 1 usuário na administração
            <svg width="13" height="9" viewBox="0 0 13 9"><path d="M0 0h13v9H0z" fill="#999" /><path d="M1 1l5.500 4L12 1M1 8l4-3.500M12 8L8 4.500" stroke="#ddd" strokeWidth=".8" fill="none" /></svg>
            <Badge>0</Badge>
            <a href="#logout"><svg width="13" height="4" viewBox="0 0 13 4"><path d="M0 0h13v3H0z" fill="#999" /></svg>Sair</a>
            <Copyright>© 2015 Studio Center - El mundo en un solo lugar!</Copyright>
          </Footer>
        </Page>
        <Scroll><Chevron /><Thumb $size={47} $top={25} /><Chevron down /></Scroll>
      </Viewport>
      <Os />
    </Desktop>
  )
}

export default App
